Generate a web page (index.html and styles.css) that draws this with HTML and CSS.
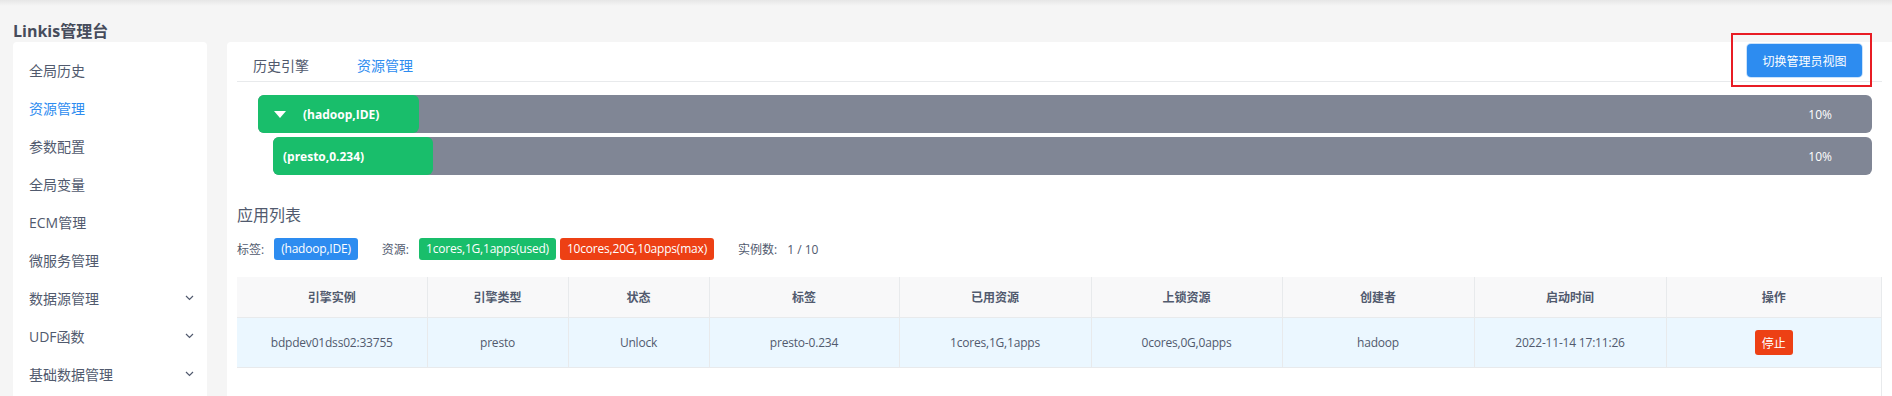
FILE: index.html
```html
<!DOCTYPE html>
<html lang="zh-CN">
<head>
  <meta charset="UTF-8" />
  <meta name="viewport" content="width=device-width, initial-scale=1" />
  <title>Linkis管理台 - 资源管理</title>
  <link rel="stylesheet" href="styles.css">
</head>
<body>
  <div class="page-title">Linkis管理台</div>

  <div class="layout">
    <ul class="side-menu">
      <li>全局历史</li>
      <li class="active">资源管理</li>
      <li>参数配置</li>
      <li>全局变量</li>
      <li>ECM管理</li>
      <li>微服务管理</li>
      <li class="sub">数据源管理<svg class="chev" width="9" height="6" viewBox="0 0 9 6"><path d="M1 1l3.5 3.5L8 1" /></svg></li>
      <li class="sub">UDF函数<svg class="chev" width="9" height="6" viewBox="0 0 9 6"><path d="M1 1l3.5 3.5L8 1" /></svg></li>
      <li class="sub">基础数据管理<svg class="chev" width="9" height="6" viewBox="0 0 9 6"><path d="M1 1l3.5 3.5L8 1" /></svg></li>
    </ul>

    <div class="main">
      <div class="tab-bar">
        <div class="tab">历史引擎</div>
        <div class="tab active">资源管理</div>
        <button class="btn-switch">切换管理员视图</button>
      </div>

      <div class="bars">
        <div class="bar">
          <div class="fill" style="width: 10%"><span class="caret"></span>(hadoop,IDE)</div>
          <span class="pct">10%</span>
        </div>
        <div class="bar child">
          <div class="fill" style="width: 10%">(presto,0.234)</div>
          <span class="pct">10%</span>
        </div>
      </div>

      <div class="section-title">应用列表</div>
      <div class="tag-row">
        <span class="label">标签:</span>
        <span class="tag blue">(hadoop,IDE)</span>
        <span class="label gap">资源:</span>
        <span class="tag green">1cores,1G,1apps(used)</span>
        <span class="tag red">10cores,20G,10apps(max)</span>
        <span class="label gap">实例数:</span>
        <span class="count">1 / 10</span>
      </div>

      <div class="table-wrap">
        <table class="grid">
          <colgroup>
            <col style="width: 190px">
            <col style="width: 141px">
            <col style="width: 141px">
            <col style="width: 190px">
            <col style="width: 192px">
            <col style="width: 191px">
            <col style="width: 192px">
            <col style="width: 192px">
            <col>
          </colgroup>
          <thead>
            <tr>
              <th>引擎实例</th>
              <th>引擎类型</th>
              <th>状态</th>
              <th>标签</th>
              <th>已用资源</th>
              <th>上锁资源</th>
              <th>创建者</th>
              <th>启动时间</th>
              <th>操作</th>
            </tr>
          </thead>
          <tbody>
            <tr>
              <td>bdpdev01dss02:33755</td>
              <td>presto</td>
              <td>Unlock</td>
              <td>presto-0.234</td>
              <td>1cores,1G,1apps</td>
              <td>0cores,0G,0apps</td>
              <td>hadoop</td>
              <td>2022-11-14 17:11:26</td>
              <td><button class="btn-stop">停止</button></td>
            </tr>
          </tbody>
        </table>
      </div>
    </div>
  </div>

  <div class="mark"></div>
</body>
</html>
```

FILE: styles.css
```css
body {
  margin: 0;
  background: #f5f5f5 linear-gradient(#e6e6e6, #f5f5f5 6px) no-repeat;
  font-family: "Open Sans", "Noto Sans CJK SC", sans-serif;
  color: #515a6e;
  overflow: hidden;
}
.page-title {
  height: 22px;
  padding: 20px 0 0 13px;
  line-height: 22px;
  font-size: 16px;
  font-weight: bold;
  color: #464c5b;
}
.layout {
  display: flex;
  gap: 20px;
  padding-left: 13px;
  height: 360px;
}

/* 左侧菜单 */
.side-menu {
  width: 194px;
  margin: 0;
  padding: 9px 0 0;
  list-style: none;
  background: #fff;
  border-radius: 4px 4px 0 0;
}
.side-menu li {
  display: flex;
  align-items: center;
  height: 38px;
  padding: 0 13px 0 16px;
  font-size: 14px;
}
.side-menu li.active {
  color: #2d8cf0;
}
.chev {
  margin-left: auto;
  fill: none;
  stroke: #515a6e;
  stroke-width: 1.2;
}

/* 右侧内容 */
.main {
  flex: 1;
  min-width: 0;
  background: #fff;
  border-radius: 4px 0 0 0;
  padding: 0 10px;
}
.tab-bar {
  display: flex;
  align-items: flex-start;
  border-bottom: 1px solid #e8eaec;
}
.tab {
  margin: 5px 16px 0 0;
  padding: 8px 16px 5px;
  line-height: 21px;
  font-size: 14px;
}
.tab.active {
  color: #2d8cf0;
}
.btn-switch {
  margin: 2px 20px 0 auto;
  width: 115px;
  height: 33px;
  border: 0;
  border-radius: 4px;
  background: #2d8cf0;
  box-shadow: 0 0 0 1px rgba(45, 140, 240, 0.25);
  color: #fff;
  font-family: inherit;
  font-size: 12px;
}

.bars {
  margin: 13px 10px 0 21px;
}
.bar {
  display: flex;
  align-items: center;
  height: 38px;
  margin-bottom: 4px;
  background: #808695;
  border-radius: 6px;
  color: #fff;
  font-size: 12px;
}
.bar.child {
  margin-left: 15px;
}
.fill {
  display: flex;
  align-items: center;
  align-self: stretch;
  padding-left: 10px;
  background: #19be6b;
  border-radius: 6px;
  font-weight: bold;
  white-space: nowrap;
  box-sizing: border-box;
}
.caret {
  width: 0;
  height: 0;
  margin: 0 17px 0 6px;
  border-left: 6px solid transparent;
  border-right: 6px solid transparent;
  border-top: 7px solid #fff;
}
.pct {
  margin-left: auto;
  padding-right: 40px;
}

.section-title {
  margin-top: 29px;
  line-height: 22px;
  font-size: 16px;
}
.tag-row {
  display: flex;
  align-items: center;
  margin-top: 12px;
  font-size: 12px;
}
.label {
  margin-right: 10px;
}
.label.gap {
  margin-left: 20px;
}
.tag {
  height: 22px;
  line-height: 22px;
  padding: 0 7px;
  margin-right: 4px;
  border-radius: 3px;
  color: #fff;
  letter-spacing: -0.2px;
}
.tag.blue { background: #2d8cf0; }
.tag.green { background: #19be6b; }
.tag.red { background: #ed4014; }

.table-wrap {
  margin-top: 17px;
  height: 200px;
  border-right: 1px solid #e8eaec;
}
.grid {
  width: 100%;
  border-collapse: collapse;
  table-layout: fixed;
  font-size: 12px;
  text-align: center;
}
.grid th,
.grid td {
  border-right: 1px solid #e8eaec;
  border-bottom: 1px solid #e8eaec;
}
.grid th:last-child,
.grid td:last-child {
  border-right: 0;
}
.grid th {
  height: 38px;
  background: #f8f8f9;
  font-weight: bold;
}
.grid td {
  height: 47px;
  background: #ebf7ff;
  letter-spacing: -0.2px;
}
.btn-stop {
  height: 25px;
  padding: 0 7px;
  border: 0;
  border-radius: 3px;
  background: #ed4014;
  color: #fff;
  font-family: inherit;
  font-size: 12px;
}

/* 截图标注框 */
.mark {
  position: absolute;
  left: 1731px;
  top: 33px;
  width: 137px;
  height: 50px;
  border: 2px solid #e81c24;
}
```
